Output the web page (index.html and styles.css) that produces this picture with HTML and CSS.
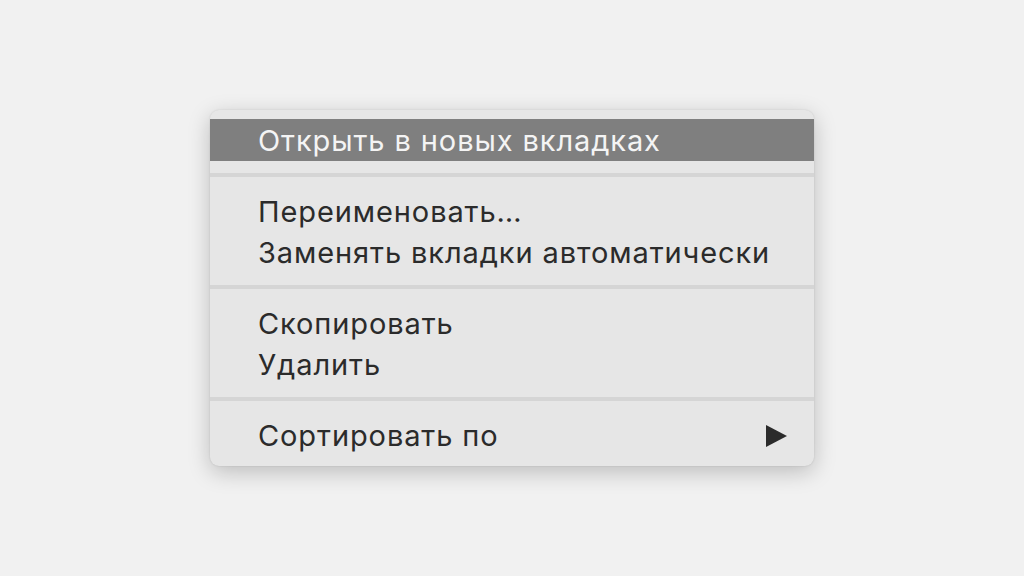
FILE: index.html
```html
<!DOCTYPE html>
<html lang="ru">
<head>
<meta charset="utf-8">
<link rel="stylesheet" href="styles.css">
</head>
<body>
<div class="menu">
  <div class="item active">Открыть в новых вкладках</div>
  <div class="sep"><div class="line"></div></div>
  <div class="item">Переименовать…</div>
  <div class="item">Заменять вкладки автоматически</div>
  <div class="sep"><div class="line"></div></div>
  <div class="item">Скопировать</div>
  <div class="item">Удалить</div>
  <div class="sep"><div class="line"></div></div>
  <div class="item sub"><span>Сортировать по</span>
    <svg class="arrow" width="21" height="22" viewBox="0 0 21 22"><path d="M0 0 L21 11 L0 22 Z" fill="#2b2b2b"/></svg>
  </div>
</div>
</body>
</html>
```
FILE: styles.css
```css
html, body {
  margin: 0;
  padding: 0;
}
body {
  width: 1024px;
  height: 576px;
  background: #f1f1f1;
  display: flex;
  align-items: center;
  justify-content: center;
  font-family: "Inter", "Liberation Sans", sans-serif;
}
.menu {
  width: 604px;
  box-sizing: border-box;
  padding: 9px 0 10px;
  background: #e6e6e6;
  border-radius: 9px;
  box-shadow: 0 6px 22px rgba(0,0,0,0.22), 0 0 2px rgba(0,0,0,0.12);
}
.item {
  height: 41px;
  display: flex;
  align-items: center;
  padding: 0 27px 0 48px;
  font-size: 29px;
  letter-spacing: 0.9px;
  color: #2b2b2b;
  white-space: nowrap;
}
.item.active {
  height: 42px;
  background: #7f7f7f;
  color: #f4f4f4;
}
.sub {
  justify-content: space-between;
}
.sep {
  padding: 12px 0 14px;
}
.line {
  height: 4px;
  background: #d5d5d5;
}
```
